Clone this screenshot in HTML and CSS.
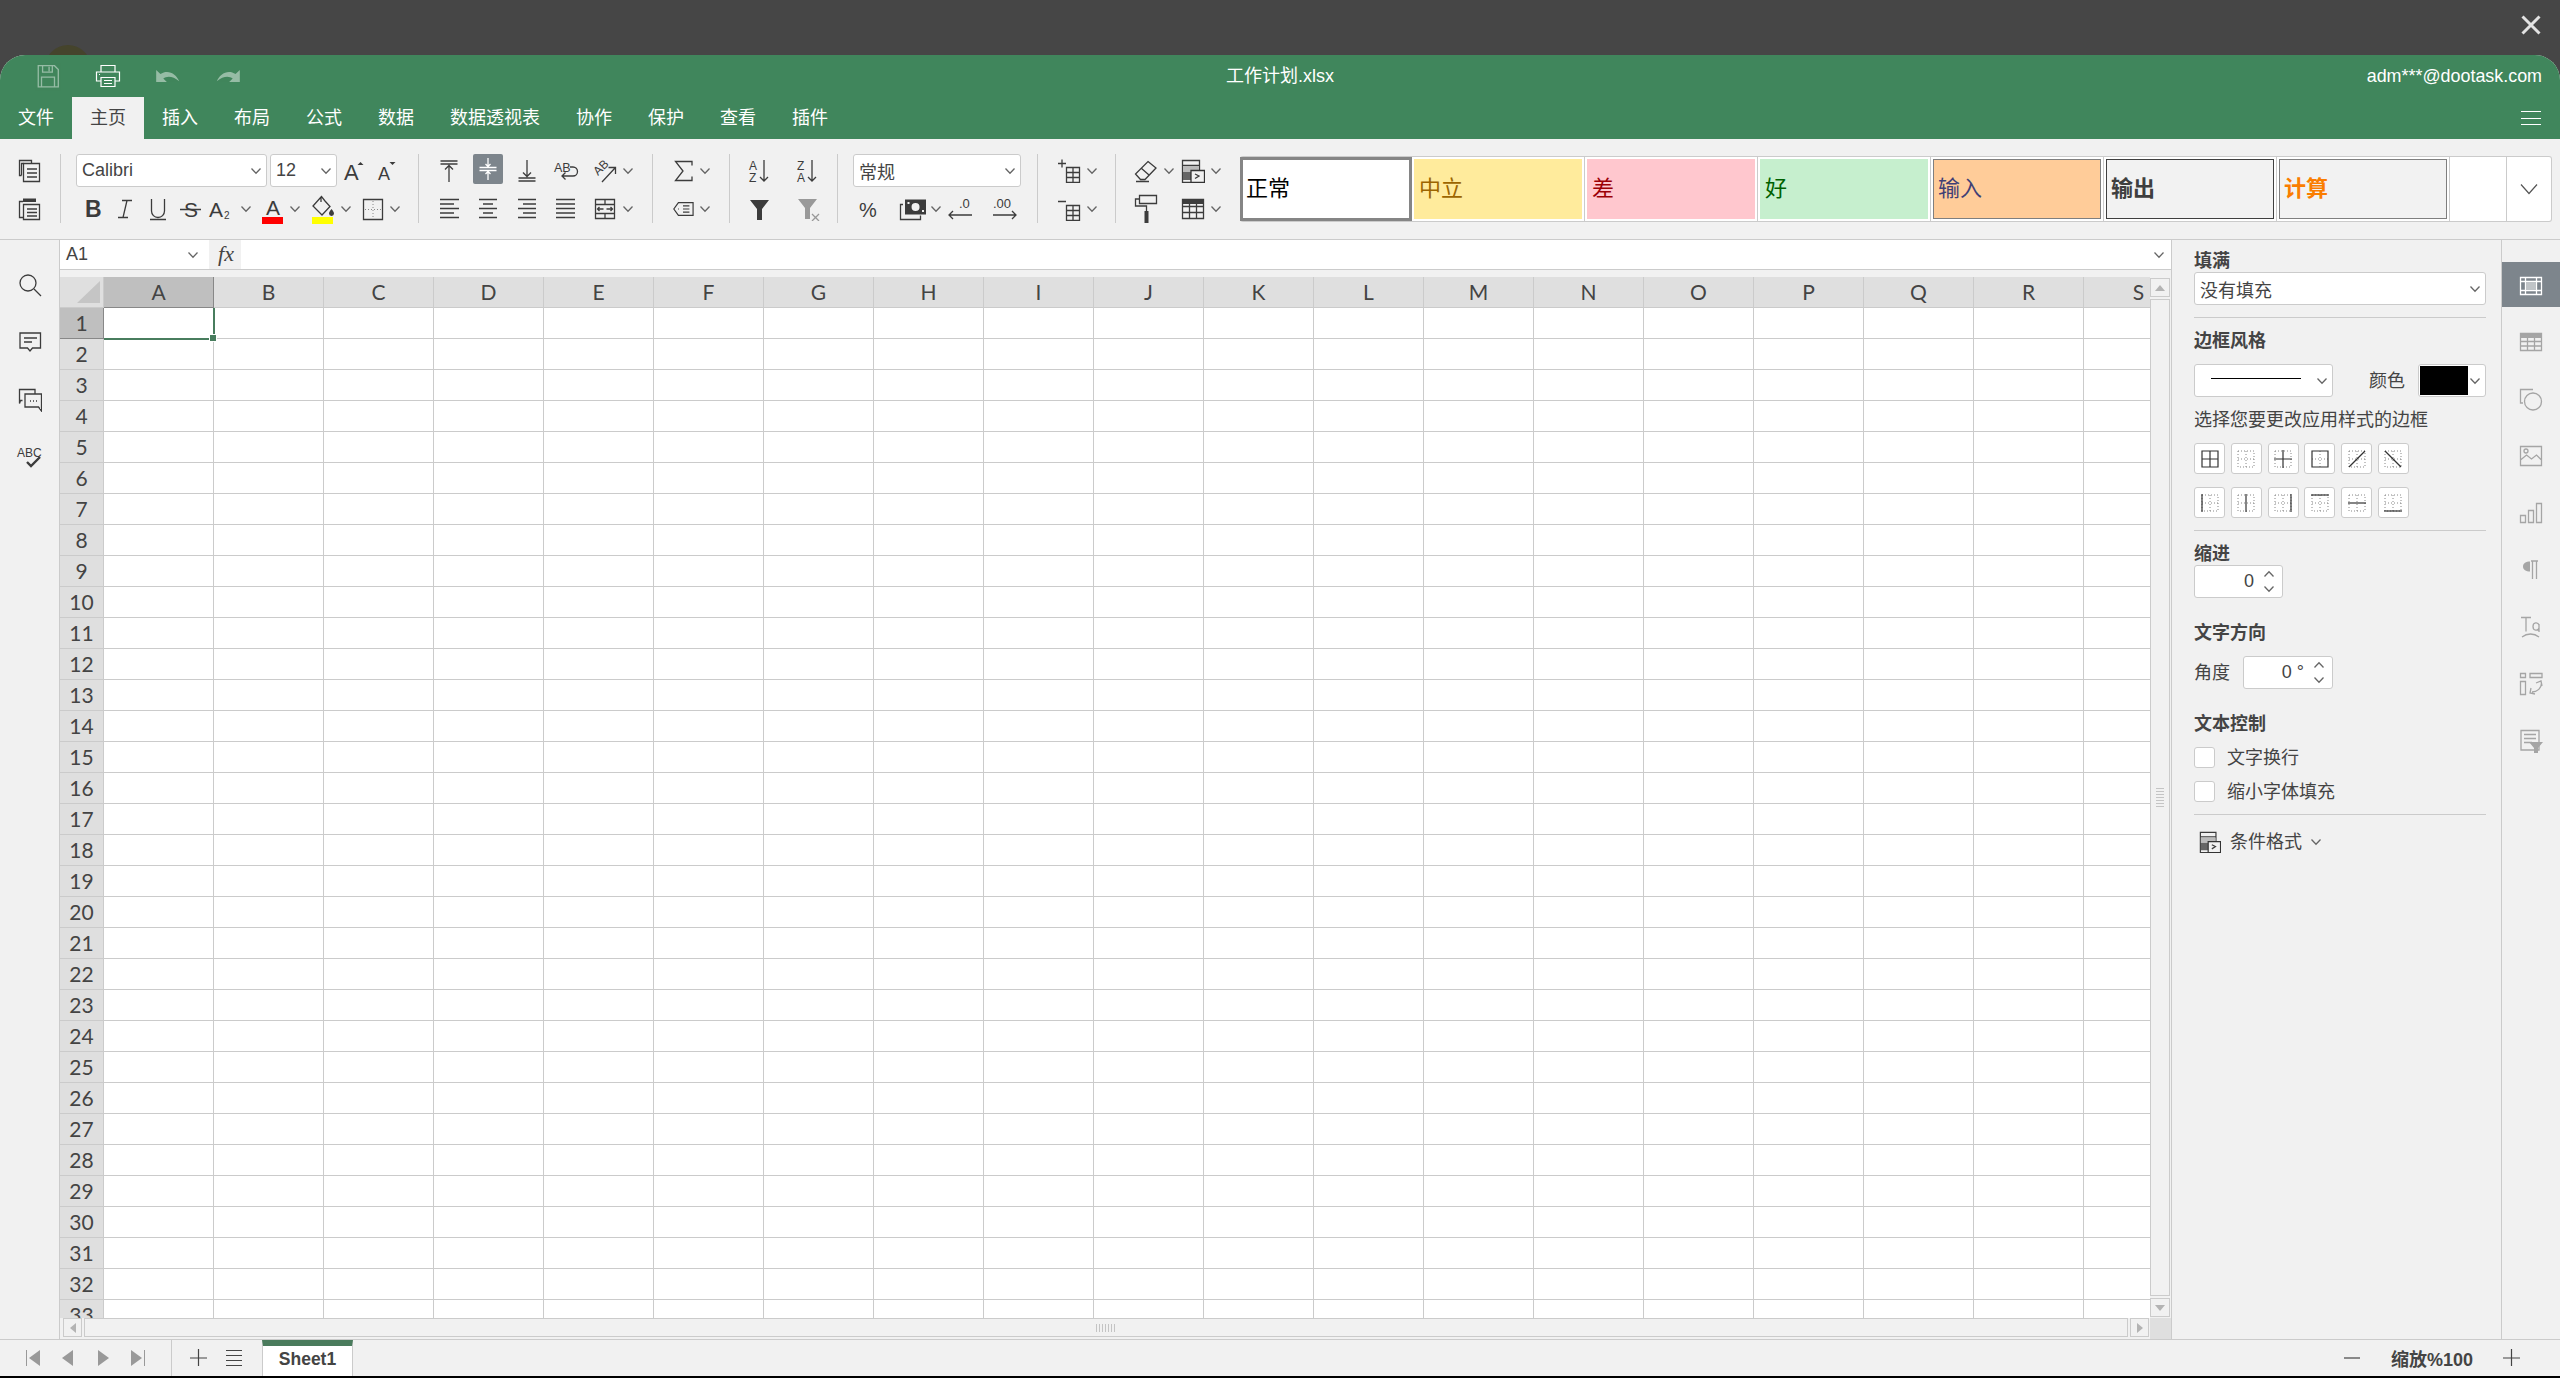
FILE: index.html
```html
<!DOCTYPE html>
<html lang="zh-CN">
<head>
<meta charset="utf-8">
<title>工作计划.xlsx</title>
<link rel="stylesheet" href="styles.css">
</head>
<body>
<svg class="defs" aria-hidden="true">
  <symbol id="chev" viewBox="0 0 12 8"><path d="M1.5 1.5 6 6.200 10.500 1.500"/></symbol>
  <symbol id="chevup" viewBox="0 0 12 8"><path d="M1.500 6.500 6 1.800 10.500 6.500"/></symbol>
  <symbol id="save" viewBox="0 0 24 24"><path d="M3 2.500h15l3.500 3.500v16h-18.500zM7 2.500v6h9v-6M13 3.500v4M6 22v-9h12v9"/></symbol>
  <symbol id="print" viewBox="0 0 26 26"><path d="M6 9V2.500h14V9M6 18H1.500V9h23v9H20M6 14.500h14v9H6zM9 17.500h8M9 20.500h8M4 11.500h1"/></symbol>
  <symbol id="undo" viewBox="0 0 22 14"><path class="f" d="M1 2v10h9L7 9.200C10 6.800 15 6.800 20.500 11.500 18 5 11 1 4.600 5.300z"/></symbol>
  <symbol id="redo" viewBox="0 0 22 14"><path class="f" d="M21 2v10h-9l3-2.800C12 6.800 7 6.800 1.500 11.500 4 5 11 1 17.400 5.300z"/></symbol>
  <symbol id="copy" viewBox="0 0 24 24"><path d="M3.500 16.500h-2v-15h12v3M5.500 4.500h16v18h-16zM9 10h10M9 14h10M9 18h10"/><path d="M3.500 16.500v-12h2"/></symbol>
  <symbol id="paste" viewBox="0 0 24 24"><path d="M5 4.500H1.500v16h4M5.500 7.500h16v15h-16zM9 12h10M9 15.500h10M9 19h10"/><path class="f" d="M5 1.500h13v3.500H5z"/></symbol>
  <symbol id="ital" viewBox="0 0 24 24"><path d="M9 3.500h10M5 20.500h10M14 3.500 10 20.500"/></symbol>
  <symbol id="under" viewBox="0 0 24 24"><path d="M5.500 2v12a6.500 6.500 0 0 0 13 0V2M4 22.500h16"/></symbol>
  <symbol id="bucket" viewBox="0 0 24 30"><path d="M10.500 2.500 2 12l9 9 8-8.500-5-5.500zM10 3V8"/><path class="f" d="M20.500 15c1.500 2 2.500 3 2.500 4.500a2.500 2.500 0 0 1-5 0c0-1.500 1-2.500 2.500-4.500z"/><path class="yel" d="M1 23h21v7H1z"/></symbol>
  <symbol id="border" viewBox="0 0 22 24"><path d="M1.500 2.500h19v20h-19z"/><path class="dots" d="M11 4v17M3 12.500h16"/></symbol>
  <symbol id="atop" viewBox="0 0 24 24"><path d="M3.500 2h17M3.500 5h17M12 23V6.500M8 10.500l4-4 4 4"/></symbol>
  <symbol id="amid" viewBox="0 0 24 24"><path d="M3.500 10.500h17M3.500 13.500h17M12 1v8.500M9.500 7l2.500 2.500L14.500 7M12 23v-8.500M9.500 17l2.500-2.500 2.500 2.500"/></symbol>
  <symbol id="abot" viewBox="0 0 24 24"><path d="M3.500 19h17M3.500 22h17M12 1v16.500M8 13.500l4 4 4-4"/></symbol>
  <symbol id="left" viewBox="0 0 24 24"><path d="M3 2.500h19M3 7h14M3 11.500h19M3 16h14M3 20.500h19"/></symbol>
  <symbol id="center" viewBox="0 0 24 24"><path d="M3 2.500h18M7 7h10M3 11.500h18M7 16h10M3 20.500h18"/></symbol>
  <symbol id="right" viewBox="0 0 24 24"><path d="M3 2.500h18M8 7h13M3 11.500h18M8 16h13M3 20.500h18"/></symbol>
  <symbol id="just" viewBox="0 0 24 24"><path d="M2 2.500h19M2 7h19M2 11.500h19M2 16h19M2 20.500h19"/></symbol>
  <symbol id="merge" viewBox="0 0 24 24"><path d="M2.500 2.500h19v19h-19zM2.500 7.500h19M2.500 16.500h19M12 2.500v5M12 16.500v5M4.500 12h6M6.500 10 4.500 12l2 2M13.500 12h6M17.500 10l2 2-2 2"/></symbol>
  <symbol id="sum" viewBox="0 0 22 24"><path d="M20 6.500V2.500H3.500L11 12 3.500 21.500H20v-4"/></symbol>
  <symbol id="tag" viewBox="0 0 24 24"><path d="M23 5H7l-5 7 5 7h16zM6.500 12h1M12 8.500h7M12 12h7M12 15.500h7"/></symbol>
  <symbol id="filter" viewBox="0 0 24 24"><path class="f" d="M2 3h19l-7 9v11h-5V12z"/></symbol>
  <symbol id="clearf" viewBox="0 0 24 24"><path class="g" d="M2 2h19l-7 9v11h-5V11z"/><path class="gs" d="M16 17l7 7M23 17l-7 7"/></symbol>
  <symbol id="money" viewBox="0 0 30 24"><path d="M5 7.500H2.500v15h20v-4"/><path class="f" fill-rule="evenodd" d="M7 2.500h21v15H7zM17.500 6a4 4 0 1 0 .1 8 4 4 0 0 0-.1-8zM9.500 5v2h2V5zM24 13v2h2v-2z"/></symbol>
  <symbol id="insc" viewBox="0 0 24 24"><path d="M1 4.500h8M5 .5v8M9.500 8.500h13v15h-13zM9.500 13.500h13M9.500 18.500h13M16 8.500v15"/></symbol>
  <symbol id="delc" viewBox="0 0 24 24"><path d="M1 4.500h8M9.500 8.500h13v15h-13zM9.500 13.500h13M9.500 18.500h13M16 8.500v15"/></symbol>
  <symbol id="erase" viewBox="0 0 24 24"><path d="M14 2.500 22 9 11 20.500H6.500L1.500 15zM7 9l8 7M2 22.500h13"/></symbol>
  <symbol id="cond" viewBox="0 0 24 24"><path d="M1.500 1.500h17v22h-17zM1.500 6.500h17"/><path class="mid" d="M2 7h16v6H2z"/><path class="dk" d="M2 13h11v8H2z"/><path class="wf" d="M10 11.500h13.500v12H10z"/><path d="M14 15l4 2-4 2.500"/></symbol>
  <symbol id="paint" viewBox="0 0 24 30"><path d="M5.500 1.500h17v8h-17zM5.500 5H1.500v7H12.500v5"/><path class="f" d="M10.500 17h4v12h-4z"/></symbol>
  <symbol id="table" viewBox="0 0 24 24"><path class="f" d="M1 2h22v5H1z"/><path d="M1.500 2.500h21v19h-21zM1.500 9.500h21M1.500 15.500h21M8.500 7v14M15.500 7v14"/></symbol>
  <symbol id="search" viewBox="0 0 24 24"><circle cx="10" cy="10" r="8"/><path d="M16 16l7 7"/></symbol>
  <symbol id="comment" viewBox="0 0 24 24"><path d="M2 2h20.500v15h-8l-2.500 3-2.500-3H2zM6 7h13M6 11h8"/></symbol>
  <symbol id="chat" viewBox="0 0 24 24"><path d="M4.500 12.500H2.500l-1 3V1.500H17v4M7 6h16.500v17l-3-4H7zM12 13h1M15 13h1M18 13h1"/></symbol>
  <symbol id="pcell" viewBox="0 0 24 24"><path d="M1.500 4.500h21v17h-21zM1.500 8.500h21M1.500 17.500h21M6.500 4.500v17M17.500 4.500v17"/><path class="panelf" d="M7 9h10v8H7z"/></symbol>
  <symbol id="ptable" viewBox="0 0 24 24"><path class="gf" d="M1 3h22v5H1z"/><path d="M1.500 3.500h21v17h-21zM1.500 11.500h21M1.500 16h21M8.500 8v12M15.500 8v12"/></symbol>
  <symbol id="pshape" viewBox="0 0 24 24"><path d="M14 2.500H1.500V16H4"/><circle cx="14" cy="14.500" r="8.500"/></symbol>
  <symbol id="pimage" viewBox="0 0 24 24"><path d="M1.500 2.500h21v19h-21zM1.500 16l6-5 5 4 5-4 5 5"/><circle cx="7" cy="7" r="2"/></symbol>
  <symbol id="pchart" viewBox="0 0 24 24"><path d="M1.500 14.500h5v7h-5zM9.500 9.500h5v12h-5zM17.500 2.500h5v19h-5z"/></symbol>
  <symbol id="ppara" viewBox="0 0 24 24"><path class="gf" d="M11 3.500c-4 0-7 1.500-7 5s3 5 7 5z"/><path d="M12 3h7M13.500 3v18M17.500 3v18"/></symbol>
  <symbol id="pta" viewBox="0 0 24 24"><path d="M2 2.500h10M7 2.500v14M3 22c5-4 12-4 17 0M20 10c-1-3-6-3-6 1.500s5 4.500 6 1.500M20 9v8"/></symbol>
  <symbol id="pspark" viewBox="0 0 24 24"><path d="M1.500 1.500h5v4h-5zM1.500 9.500h5v13h-5zM11 1.500h12v4H11zM22.500 11c0 5-4 9-9.500 9M12 16l-1 5 5 1M23 14l-1-5-5 2"/></symbol>
  <symbol id="pfilter" viewBox="0 0 24 24"><path d="M2 1.500h18V21H2zM5 5.500h12M5 9.500h12M5 13.500h8"/><path class="gf" d="M10 13h14l-5 6v5h-4v-5z"/></symbol>
  <symbol id="tfirst" viewBox="0 0 16 16"><path class="g" d="M1 0h1v16H1zM15 0v16L4 8z"/></symbol>
  <symbol id="tprev" viewBox="0 0 16 16"><path class="g" d="M13 0v16L2 8z"/></symbol>
  <symbol id="tnext" viewBox="0 0 16 16"><path class="g" d="M3 0v16l11-8z"/></symbol>
  <symbol id="tlast" viewBox="0 0 16 16"><path class="g" d="M14 0h1v16h-1zM1 0v16l11-8z"/></symbol>
  <symbol id="plus" viewBox="0 0 18 18"><path d="M0 9h17M8.500 0v17"/></symbol>
  <symbol id="menu" viewBox="0 0 18 18"><path d="M1 1.500h16M1 6.500h16M1 11.500h16M1 16.500h16"/></symbol>
  <symbol id="minus" viewBox="0 0 18 18"><path d="M1 9h16"/></symbol>
  <symbol id="b-all" viewBox="0 0 18 18"><path d="M1 1h16v16H1zM9 1v16M1 9h16"/></symbol>
  <symbol id="b-none" viewBox="0 0 18 18"><path class="dots" d="M1 1h16v16H1zM9 1v16M1 9h16"/></symbol>
  <symbol id="b-in" viewBox="0 0 18 18"><path class="dots" d="M1 1h16v16H1z"/><path d="M9 0v18M0 9h18"/></symbol>
  <symbol id="b-out" viewBox="0 0 18 18"><path class="dots" d="M9 1v16M1 9h16"/><path d="M1 1h16v16H1z"/></symbol>
  <symbol id="b-up" viewBox="0 0 18 18"><path class="dots" d="M1 1h16v16H1zM9 1v16M1 9h16"/><path d="M1 17 17 1"/></symbol>
  <symbol id="b-dn" viewBox="0 0 18 18"><path class="dots" d="M1 1h16v16H1zM9 1v16M1 9h16"/><path d="M1 1l16 16"/></symbol>
  <symbol id="b-l" viewBox="0 0 18 18"><path class="dots" d="M1 1h16v16H1zM9 1v16M1 9h16"/><path d="M1 0v18"/></symbol>
  <symbol id="b-c" viewBox="0 0 18 18"><path class="dots" d="M1 1h16v16H1zM1 9h16"/><path d="M9 0v18"/></symbol>
  <symbol id="b-r" viewBox="0 0 18 18"><path class="dots" d="M1 1h16v16H1zM9 1v16M1 9h16"/><path d="M17 0v18"/></symbol>
  <symbol id="b-t" viewBox="0 0 18 18"><path class="dots" d="M1 1h16v16H1zM9 1v16M1 9h16"/><path d="M0 1h18"/></symbol>
  <symbol id="b-m" viewBox="0 0 18 18"><path class="dots" d="M1 1h16v16H1zM9 1v16"/><path d="M0 9h18"/></symbol>
  <symbol id="b-b" viewBox="0 0 18 18"><path class="dots" d="M1 1h16v16H1zM9 1v16M1 9h16"/><path d="M0 17h18"/></symbol>
</svg>

<div class="page">
  <div class="backdrop">
    <span class="blob"></span>
    <svg class="close" viewBox="0 0 20 20"><path d="M1.500 1.500 18.500 18.500M18.500 1.500 1.500 18.500"/></svg>
  </div>

  <div class="window">
    <header class="titlebar">
      <div class="quick">
        <svg class="q dim"><use href="#save"/></svg>
        <svg class="q"><use href="#print"/></svg>
        <svg class="q dim"><use href="#undo"/></svg>
        <svg class="q dim"><use href="#redo"/></svg>
      </div>
      <div class="doc">工作计划.xlsx</div>
      <div class="user">adm***@dootask.com</div>
    </header>

    <nav class="tabs">
      <span class="tab">文件</span>
      <span class="tab on">主页</span>
      <span class="tab">插入</span>
      <span class="tab">布局</span>
      <span class="tab">公式</span>
      <span class="tab">数据</span>
      <span class="tab">数据透视表</span>
      <span class="tab">协作</span>
      <span class="tab">保护</span>
      <span class="tab">查看</span>
      <span class="tab">插件</span>
      <span class="burger"><i></i><i></i><i></i></span>
    </nav>

    <section class="toolbar">
      <div class="grp g1">
        <div class="r"><span class="b"><svg class="i"><use href="#copy"/></svg></span></div>
        <div class="r"><span class="b"><svg class="i"><use href="#paste"/></svg></span></div>
      </div>
      <div class="grp g2">
        <div class="r">
          <div class="sel s-font"><span>Calibri</span><svg class="c"><use href="#chev"/></svg></div>
          <div class="sel s-size"><span>12</span><svg class="c"><use href="#chev"/></svg></div>
          <span class="b ml2"><svg class="i n" viewBox="0 0 22 24"><text x="1" y="21" class="t" font-size="22">A</text><path class="f" d="M14.500 6l3-3 3 3z"/></svg></span>
          <span class="b ml2"><svg class="i n" viewBox="0 0 22 24"><text x="3" y="21" class="t" font-size="18">A</text><path class="f" d="M14.500 3h6l-3 3z"/></svg></span>
        </div>
        <div class="r">
          <span class="b w33 lead"><svg class="i" viewBox="0 0 24 24"><text x="5" y="20" class="t strong" font-size="23">B</text></svg></span>
          <span class="b w33"><svg class="i"><use href="#ital"/></svg></span>
          <span class="b w33"><svg class="i"><use href="#under"/></svg></span>
          <span class="b w33"><svg class="i" viewBox="0 0 24 24"><text x="5" y="20" class="t" font-size="21">S</text><path d="M1 12.500h21"/></svg></span>
          <span class="s"><svg class="i w28" viewBox="0 0 28 24"><text x="2" y="20" class="t" font-size="21">A</text><text x="17" y="22" class="t" font-size="10">2</text></svg><svg class="c"><use href="#chev"/></svg></span>
          <span class="s ml10"><svg class="i tall22" viewBox="0 0 22 30"><text x="4" y="21" class="t" font-size="21">A</text><path class="red" d="M0 23h21v7H0z"/></svg><svg class="c"><use href="#chev"/></svg></span>
          <span class="s ml10"><svg class="i tall"><use href="#bucket"/></svg><svg class="c"><use href="#chev"/></svg></span>
          <span class="s ml10"><svg class="i n"><use href="#border"/></svg><svg class="c"><use href="#chev"/></svg></span>
        </div>
      </div>
      <div class="grp g3">
        <div class="r">
          <span class="b"><svg class="i"><use href="#atop"/></svg></span>
          <span class="b active"><svg class="i"><use href="#amid"/></svg></span>
          <span class="b"><svg class="i"><use href="#abot"/></svg></span>
          <span class="b"><svg class="i" viewBox="0 0 24 24"><text x="0" y="13" class="t" font-size="12.500">AB</text><path d="M16 8h3a3 3 0 0 1 0 9H8M11.500 13.500 8 17l3.500 3.500"/></svg></span>
          <span class="b"><svg class="i" viewBox="0 0 24 24"><text x="0" y="0" class="t" font-size="12" transform="translate(5 17) rotate(-45)">AB</text><path d="M9 23 22 9M15.500 8.500H22.500V15"/></svg></span>
          <svg class="c pull"><use href="#chev"/></svg>
        </div>
        <div class="r">
          <span class="b"><svg class="i"><use href="#left"/></svg></span>
          <span class="b"><svg class="i"><use href="#center"/></svg></span>
          <span class="b"><svg class="i"><use href="#right"/></svg></span>
          <span class="b"><svg class="i"><use href="#just"/></svg></span>
          <span class="b"><svg class="i"><use href="#merge"/></svg></span>
          <svg class="c pull"><use href="#chev"/></svg>
        </div>
      </div>
      <div class="grp g4">
        <div class="r"><span class="s"><svg class="i n"><use href="#sum"/></svg><svg class="c"><use href="#chev"/></svg></span></div>
        <div class="r"><span class="s"><svg class="i n"><use href="#tag"/></svg><svg class="c"><use href="#chev"/></svg></span></div>
      </div>
      <div class="grp g5">
        <div class="r gap18">
          <span class="b"><svg class="i" viewBox="0 0 24 24"><text x="1" y="11" class="t" font-size="12">A</text><text x="1" y="23" class="t" font-size="12">Z</text><path d="M16 1v21M12 18l4 4 4-4"/></svg></span>
          <span class="b"><svg class="i" viewBox="0 0 24 24"><text x="1" y="11" class="t" font-size="12">Z</text><text x="1" y="23" class="t" font-size="12">A</text><path d="M16 1v21M12 18l4 4 4-4"/></svg></span>
        </div>
        <div class="r gap18">
          <span class="b"><svg class="i"><use href="#filter"/></svg></span>
          <span class="b"><svg class="i"><use href="#clearf"/></svg></span>
        </div>
      </div>
      <div class="grp g6">
        <div class="r"><div class="sel s-num"><span>常规</span><svg class="c"><use href="#chev"/></svg></div></div>
        <div class="r">
          <span class="b"><svg class="i" viewBox="0 0 24 24"><text x="3" y="20" class="t" font-size="20">%</text></svg></span>
          <span class="s gap2 ml15"><svg class="i w30"><use href="#money"/></svg><svg class="c"><use href="#chev"/></svg></span>
          <span class="b w26 ml5"><svg class="i w26" viewBox="0 0 26 24"><text x="12" y="11" class="t" font-size="13">.0</text><path d="M25 18H2M6 14l-4 4 4 4"/></svg></span>
          <span class="b w26 ml19"><svg class="i w26" viewBox="0 0 26 24"><text x="1" y="11" class="t" font-size="13">.00</text><path d="M1 18h23M20 14l4 4-4 4"/></svg></span>
        </div>
      </div>
      <div class="grp g7">
        <div class="r"><span class="s"><svg class="i"><use href="#insc"/></svg><svg class="c"><use href="#chev"/></svg></span></div>
        <div class="r"><span class="s"><svg class="i"><use href="#delc"/></svg><svg class="c"><use href="#chev"/></svg></span></div>
      </div>
      <div class="grp g8">
        <div class="r">
          <span class="s"><svg class="i"><use href="#erase"/></svg><svg class="c"><use href="#chev"/></svg></span>
          <span class="s ml6"><svg class="i"><use href="#cond"/></svg><svg class="c"><use href="#chev"/></svg></span>
        </div>
        <div class="r">
          <span class="s"><svg class="i tall"><use href="#paint"/></svg><span class="ph"></span></span>
          <span class="s ml6"><svg class="i"><use href="#table"/></svg><svg class="c"><use href="#chev"/></svg></span>
        </div>
      </div>
      <div class="gallery">
        <div class="gcell picked"><span class="gfill normal">正常</span></div>
        <div class="gcell"><span class="gfill neutral">中立</span></div>
        <div class="gcell"><span class="gfill bad">差</span></div>
        <div class="gcell"><span class="gfill good">好</span></div>
        <div class="gcell"><span class="gfill input">输入</span></div>
        <div class="gcell"><span class="gfill output">输出</span></div>
        <div class="gcell"><span class="gfill calc">计算</span></div>
        <div class="gspace"></div>
        <div class="gmore"><svg viewBox="0 0 18 12"><path d="M1 1.500 9 10.500 17 1.500"/></svg></div>
      </div>
    </section>

    <main class="main">
      <aside class="leftbar">
        <svg class="i"><use href="#search"/></svg>
        <svg class="i"><use href="#comment"/></svg>
        <svg class="i"><use href="#chat"/></svg>
        <svg class="i w26" viewBox="0 0 26 24"><text x="0" y="11" class="t" font-size="12">ABC</text><path class="heavy" d="M10 16l4 4 9-9"/></svg>
      </aside>

      <section class="sheet">
        <div class="formula">
          <div class="namebox"><span>A1</span><svg class="c"><use href="#chev"/></svg></div>
          <div class="fx">fx</div>
          <div class="finput"><svg class="c"><use href="#chev"/></svg></div>
        </div>
        <div class="strip"></div>
        <div class="gridrow">
          <div class="gridbody">
            <div class="colhead">
              <div class="corner"><svg viewBox="0 0 24 23"><path d="M24 0v23H0z"/></svg></div>
              <div class="col sel-h">A</div><div class="col">B</div><div class="col">C</div><div class="col">D</div><div class="col">E</div><div class="col">F</div><div class="col">G</div><div class="col">H</div><div class="col">I</div><div class="col">J</div><div class="col">K</div><div class="col">L</div><div class="col">M</div><div class="col">N</div><div class="col">O</div><div class="col">P</div><div class="col">Q</div><div class="col">R</div><div class="col">S</div>
            </div>
            <div class="gridmain">
              <div class="rowhead">
                <div class="rw sel-h">1</div><div class="rw">2</div><div class="rw">3</div><div class="rw">4</div><div class="rw">5</div><div class="rw">6</div><div class="rw">7</div><div class="rw">8</div><div class="rw">9</div><div class="rw">10</div><div class="rw">11</div><div class="rw">12</div><div class="rw">13</div><div class="rw">14</div><div class="rw">15</div><div class="rw">16</div><div class="rw">17</div><div class="rw">18</div><div class="rw">19</div><div class="rw">20</div><div class="rw">21</div><div class="rw">22</div><div class="rw">23</div><div class="rw">24</div><div class="rw">25</div><div class="rw">26</div><div class="rw">27</div><div class="rw">28</div><div class="rw">29</div><div class="rw">30</div><div class="rw">31</div><div class="rw">32</div><div class="rw">33</div>
              </div>
              <div class="cells"><div class="cursor"><i></i></div></div>
            </div>
          </div>
          <div class="vscroll">
            <div class="sbtn"><span class="tri up"></span></div>
            <div class="vthumb"><span class="vgrip"></span></div>
            <div class="sbtn"><span class="tri down"></span></div>
          </div>
        </div>
        <div class="hscroll">
          <div class="sbtn"><span class="tri lft"></span></div>
          <div class="hthumb"><span class="hgrip"></span></div>
          <div class="sbtn"><span class="tri rgt"></span></div>
          <div class="scorner"></div>
        </div>
      </section>

      <aside class="panel">
        <div class="lab first">填满</div>
        <div class="sel s-fill"><span>没有填充</span><svg class="c"><use href="#chev"/></svg></div>
        <hr class="sep">
        <div class="lab">边框风格</div>
        <div class="frow">
          <div class="sel s-line"><span class="line"></span><svg class="c"><use href="#chev"/></svg></div>
          <span class="txt colorlab">颜色</span>
          <div class="sel s-color"><span class="swatch"></span><svg class="c"><use href="#chev"/></svg></div>
        </div>
        <div class="txt hint">选择您要更改应用样式的边框</div>
        <div class="bgrid">
          <span class="bb"><svg><use href="#b-all"/></svg></span>
          <span class="bb"><svg><use href="#b-none"/></svg></span>
          <span class="bb"><svg><use href="#b-in"/></svg></span>
          <span class="bb"><svg><use href="#b-out"/></svg></span>
          <span class="bb"><svg><use href="#b-up"/></svg></span>
          <span class="bb"><svg><use href="#b-dn"/></svg></span>
          <span class="bb"><svg><use href="#b-l"/></svg></span>
          <span class="bb"><svg><use href="#b-c"/></svg></span>
          <span class="bb"><svg><use href="#b-r"/></svg></span>
          <span class="bb"><svg><use href="#b-t"/></svg></span>
          <span class="bb"><svg><use href="#b-m"/></svg></span>
          <span class="bb"><svg><use href="#b-b"/></svg></span>
        </div>
        <hr class="sep">
        <div class="lab">缩进</div>
        <div class="spin indent"><span>0</span><span class="arrows"><svg class="c"><use href="#chevup"/></svg><svg class="c"><use href="#chev"/></svg></span></div>
        <div class="lab gapped">文字方向</div>
        <div class="frow">
          <span class="txt">角度</span>
          <div class="spin angle"><span>0 °</span><span class="arrows"><svg class="c"><use href="#chevup"/></svg><svg class="c"><use href="#chev"/></svg></span></div>
        </div>
        <div class="lab gapped">文本控制</div>
        <label class="chk"><span class="box"></span><span class="txt">文字换行</span></label>
        <label class="chk"><span class="box"></span><span class="txt">缩小字体填充</span></label>
        <hr class="sep">
        <div class="condf"><svg class="i w20"><use href="#cond"/></svg><span class="txt">条件格式</span><svg class="c"><use href="#chev"/></svg></div>
      </aside>

      <aside class="rightbar">
        <span class="ri on"><svg class="i"><use href="#pcell"/></svg></span>
        <span class="ri"><svg class="i"><use href="#ptable"/></svg></span>
        <span class="ri"><svg class="i"><use href="#pshape"/></svg></span>
        <span class="ri"><svg class="i"><use href="#pimage"/></svg></span>
        <span class="ri"><svg class="i"><use href="#pchart"/></svg></span>
        <span class="ri"><svg class="i"><use href="#ppara"/></svg></span>
        <span class="ri"><svg class="i"><use href="#pta"/></svg></span>
        <span class="ri"><svg class="i"><use href="#pspark"/></svg></span>
        <span class="ri"><svg class="i"><use href="#pfilter"/></svg></span>
      </aside>
    </main>

    <footer class="status">
      <div class="nav">
        <svg class="nv"><use href="#tfirst"/></svg>
        <svg class="nv"><use href="#tprev"/></svg>
        <svg class="nv"><use href="#tnext"/></svg>
        <svg class="nv"><use href="#tlast"/></svg>
      </div>
      <svg class="act add"><use href="#plus"/></svg>
      <svg class="act lst"><use href="#menu"/></svg>
      <div class="stab">Sheet1</div>
      <div class="zoom">
        <svg class="act"><use href="#minus"/></svg>
        <span class="zt">缩放%100</span>
        <svg class="act"><use href="#plus"/></svg>
      </div>
    </footer>
  </div>
</div>
</body>
</html>
```

FILE: styles.css
```css
* { box-sizing: border-box; }
html, body { margin: 0; padding: 0; }
body {
  width: 2560px;
  height: 1378px;
  overflow: hidden;
  background: #000;
  font-family: "Liberation Sans", "Noto Sans CJK SC", sans-serif;
  color: #444;
}
.defs { position: absolute; width: 0; height: 0; overflow: hidden; }
.page {
  height: 1376px;
  background: #464646;
  display: flex;
  flex-direction: column;
}
.backdrop {
  height: 55px;
  flex: none;
  position: relative;
  display: flex;
  justify-content: flex-end;
  align-items: flex-start;
  overflow: hidden;
}
.blob {
  position: absolute;
  left: 45px;
  top: 45px;
  width: 46px;
  height: 46px;
  border-radius: 50%;
  background: #45442c;
}
.close { width: 20px; height: 20px; margin: 15px 19px 0 0; fill: none; stroke: #e2e2e2; stroke-width: 3; }

.window {
  flex: 1;
  min-height: 0;
  display: flex;
  flex-direction: column;
  background: #f1f1f1;
  border-radius: 25px 25px 0 0;
  overflow: hidden;
}

/* title */
.titlebar {
  height: 42px;
  flex: none;
  background: #40865c;
  display: grid;
  grid-template-columns: 1fr auto 1fr;
  align-items: center;
  color: #fff;
  font-size: 18px;
}
.quick { display: flex; align-items: center; padding-left: 35px; }
.q { width: 26px; height: 26px; margin-right: 34px; fill: none; stroke: #fff; stroke-width: 1.2; color: #fff; }
.dim { opacity: .45; }
.doc { line-height: 42px; }
.user { text-align: right; padding-right: 18px; font-size: 17.900px; }

/* tabs */
.tabs {
  height: 42px;
  flex: none;
  background: #40865c;
  display: flex;
  align-items: stretch;
  color: #fff;
  font-size: 18px;
  position: relative;
}
.tab { padding: 0 18px; line-height: 42px; }
.tab.on { background: #f1f1f1; color: #444; }
.burger {
  margin-left: auto;
  margin-right: 19px;
  align-self: center;
  width: 20px;
  height: 14px;
  display: flex;
  flex-direction: column;
  justify-content: space-between;
}
.burger i { display: block; height: 1px; background: #fff; }

/* toolbar */
.toolbar {
  height: 101px;
  flex: none;
  display: flex;
  align-items: flex-start;
  padding-top: 15px;
  background: #f1f1f1;
  border-bottom: 1px solid #cbcbcb;
}
.grp {
  height: 69px;
  flex: none;
  border-right: 1px solid #cbcbcb;
}
.g1 { width: 61px; padding-left: 15px; }
.g2 { width: 358px; padding-left: 15px; }
.g3 { width: 234px; padding-left: 15px; }
.g4 { width: 77px; padding-left: 19px; }
.g5 { width: 108px; padding-left: 15px; }
.g6 { width: 200px; padding-left: 15px; }
.g7 { width: 78px; padding-left: 19px; }
.g8 { width: 124px; padding-left: 18px; border-right: 0; }

.r { display: flex; align-items: center; height: 33px; }
.r + .r { margin-top: 5px; }
.g3 .r { gap: 9px; }
.gap18 { gap: 18px; }
.b {
  width: 30px;
  height: 30px;
  flex: none;
  display: flex;
  align-items: center;
  justify-content: center;
}
.w33 { width: 33px; }
.w26 { width: 26px; }
.lead { margin-left: -1px; }
.ml2 { margin-left: 2px; }
.ml5 { margin-left: 5px; }
.ml6 { margin-left: 6px; }
.ml10 { margin-left: 10px; }
.ml15 { margin-left: 15px; }
.ml19 { margin-left: 19px; }
.s.gap2 { gap: 2px; }
.pull { margin-left: -7px; }
.ph { width: 12px; flex: none; }
.s { display: flex; align-items: center; gap: 5px; flex: none; }

.i {
  width: 24px;
  height: 24px;
  flex: none;
  fill: none;
  color: #3c3c3c;
  stroke: currentColor;
  stroke-width: 1.3;
  overflow: visible;
}
.i.n { width: 22px; }
.i.w26 { width: 26px; }
.i.w28 { width: 28px; }
.i.w30 { width: 30px; }
.i.w20 { width: 22px; height: 22px; }
.i.tall { height: 30px; }
.i.tall22 { width: 22px; height: 30px; }
.c {
  width: 12px;
  height: 8px;
  flex: none;
  fill: none;
  stroke: #666;
  stroke-width: 1.3;
}
.t { fill: currentColor; stroke: none; font-family: "Liberation Sans", sans-serif; }
.t.strong { font-weight: 700; }
.f { fill: currentColor; stroke: none; }
.dk { fill: #666; stroke: none; }
.g { fill: #999; stroke: none; }
.gs { stroke: #999; }
.gf { fill: #a5a5a5; stroke: none; }
.mid { fill: #bbb; stroke: none; }
.wf { fill: #f1f1f1; stroke: #333; }
.red { fill: #f00; stroke: none; }
.yel { fill: #ff0; stroke: none; }
.dots { stroke: #888; stroke-dasharray: 1 2; stroke-width: 1; }
.heavy { stroke-width: 2.4; }

.active { background: #7d858c; border-radius: 2px; align-self: flex-start; }
.active .i { color: #fff; }

.sel {
  height: 33px;
  flex: none;
  display: flex;
  align-items: center;
  justify-content: space-between;
  background: #fff;
  border: 1px solid #cbcbcb;
  border-radius: 3px;
  font-size: 18px;
  padding: 0 4px 0 5px;
  color: #444;
}
.s-font { width: 191px; }
.s-size { width: 67px; margin-left: 3px; }
.s-num { width: 168px; }

/* gallery */
.gallery {
  width: 1312px;
  height: 66px;
  margin-top: 2px;
  flex: none;
  display: flex;
  background: #fff;
  border: 1px solid #cbcbcb;
  border-left: 0;
  border-radius: 3px;
  font-size: 22px;
}
.gcell {
  width: 173px;
  flex: none;
  padding: 2px 2px;
  border-right: 1px solid #cbcbcb;
  display: flex;
}
.gcell.picked { outline: 3px solid #858585; outline-offset: -3px; width: 172px; padding-left: 3px; }
.gfill {
  flex: 1;
  line-height: 60px;
  padding-left: 5px;
}
.normal { color: #000; padding-left: 3px; }
.neutral { background: #ffeb9c; color: #9c6500; }
.bad { background: #ffc7ce; color: #9c0006; }
.good { background: #c6efce; color: #006100; }
.input { background: #fc9; color: #3f3f76; box-shadow: inset 0 0 0 1px #7f7f7f; }
.output { background: #f2f2f2; color: #3f3f3f; font-weight: 700; box-shadow: inset 0 0 0 1px #3f3f3f; }
.calc { background: #f2f2f2; color: #fa7d00; font-weight: 700; box-shadow: inset 0 0 0 1px #7f7f7f; }
.gspace { width: 57px; flex: none; border-right: 1px solid #cbcbcb; }
.gmore { flex: 1; display: flex; align-items: center; justify-content: center; }
.gmore svg { width: 18px; height: 12px; fill: none; stroke: #555; stroke-width: 1.2; }

/* main */
.main { flex: 1; min-height: 0; display: flex; background: #f1f1f1; }
.leftbar {
  width: 60px;
  flex: none;
  border-right: 1px solid #cbcbcb;
  display: flex;
  flex-direction: column;
  align-items: center;
  padding-top: 33px;
  gap: 33.500px;
}
.sheet {
  width: 2112px;
  flex: none;
  display: flex;
  flex-direction: column;
  border-right: 1px solid #cbcbcb;
}
.formula {
  height: 30px;
  flex: none;
  display: flex;
  border-bottom: 1px solid #cbcbcb;
}
.namebox {
  width: 149px;
  background: #fff;
  display: flex;
  align-items: center;
  justify-content: space-between;
  padding: 0 10px 0 6px;
  font-size: 18px;
}
.fx {
  width: 30px;
  margin-left: 2px;
  text-align: center;
  font: italic 22px/28px "Liberation Serif", serif;
}
.finput {
  flex: 1;
  background: #fff;
  display: flex;
  align-items: center;
  justify-content: flex-end;
  padding-right: 6px;
}
.strip { height: 7px; flex: none; }
.gridrow { flex: 1; min-height: 0; display: flex; }
.gridbody {
  flex: 1;
  min-width: 0;
  display: flex;
  flex-direction: column;
  overflow: hidden;
}
.colhead { height: 31px; flex: none; display: flex; }
.corner {
  width: 44px;
  flex: none;
  background: #dfdfdf;
  border-right: 1px solid #cbcbcb;
  border-bottom: 1px solid #cbcbcb;
  padding: 4px 3px 0 17px;
}
.corner svg { display: block; width: 23px; height: 22px; fill: #c5c5c5; }
.col {
  width: 110px;
  flex: none;
  background: #dfdfdf;
  border-right: 1px solid #cbcbcb;
  border-bottom: 1px solid #cbcbcb;
  text-align: center;
  font: 21px/30px Lato, "Liberation Sans", sans-serif;
  color: #444;
}
.gridmain { flex: 1; min-height: 0; display: flex; }
.rowhead { width: 44px; flex: none; overflow: hidden; }
.rw {
  height: 31px;
  background: #dfdfdf;
  border-right: 1px solid #cbcbcb;
  border-bottom: 1px solid #cbcbcb;
  text-align: center;
  font: 21px/29px Lato, "Liberation Sans", sans-serif;
  color: #444;
}
.sel-h { background: #bfbfbf; border-right-color: #888; border-bottom-color: #888; }
.cells {
  flex: 1;
  position: relative;
  background-color: #fff;
  background-image:
    linear-gradient(to right, transparent 109px, #cbcbcb 109px),
    linear-gradient(to bottom, transparent 30px, #cbcbcb 30px);
  background-size: 110px 31px;
}
.cursor {
  position: absolute;
  left: 0;
  top: 0;
  width: 111px;
  height: 32px;
  border-right: 2px solid #487d5e;
  border-bottom: 2px solid #487d5e;
}
.cursor i {
  position: absolute;
  right: -3px;
  bottom: -3px;
  width: 6px;
  height: 6px;
  background: #487d5e;
  border: 1px solid #487d5e;
  outline: 1px solid #fff;
}
.vscroll {
  width: 21px;
  flex: none;
  display: flex;
  flex-direction: column;
  gap: 2px;
  padding: 1px 1px 1px 0;
}
.sbtn {
  flex: none;
  width: 20px;
  height: 20px;
  border: 1px solid #cbcbcb;
  background: #f1f1f1;
  display: flex;
  align-items: center;
  justify-content: center;
}
.vscroll .sbtn { height: 19px; }
.vthumb {
  flex: 1;
  border: 1px solid #cbcbcb;
  display: flex;
  align-items: center;
  justify-content: center;
}
.vgrip {
  width: 8px;
  height: 20px;
  background: repeating-linear-gradient(to bottom, #c4c4c4 0 1px, transparent 1px 3px);
}
.tri { width: 0; height: 0; border-style: solid; border-color: transparent; }
.tri.up { border-width: 0 5px 6px; border-bottom-color: #b3b3b3; }
.tri.down { border-width: 6px 5px 0; border-top-color: #b3b3b3; }
.tri.lft { border-width: 5px 6px 5px 0; border-right-color: #b3b3b3; }
.tri.rgt { border-width: 5px 0 5px 6px; border-left-color: #b3b3b3; }
.hscroll {
  height: 21px;
  flex: none;
  display: flex;
  gap: 2px;
  padding-left: 2px;
  border-left: 1px solid transparent;
}
.hscroll .sbtn { height: 19px; width: 19px; }
.hthumb {
  flex: 1;
  height: 19px;
  border: 1px solid #cbcbcb;
  display: flex;
  align-items: center;
  justify-content: center;
}
.hgrip {
  width: 20px;
  height: 8px;
  background: repeating-linear-gradient(to right, #c4c4c4 0 1px, transparent 1px 3px);
}
.scorner { width: 21px; flex: none; margin-left: -1px; background: #dfdfdf; }

/* format panel */
.panel {
  width: 330px;
  flex: none;
  padding: 0 15px 0 22px;
  border-right: 1px solid #cbcbcb;
  font-size: 18px;
  color: #444;
}
.lab { font-weight: 700; line-height: 22px; margin-top: 12px; }
.lab.first { margin-top: 10px; }
.lab.gapped { margin-top: 24px; }
.txt { line-height: 22px; }
.sep { height: 1px; border: 0; background: #cbcbcb; margin: 12px 0 0; }
.s-fill { width: 100%; }
.frow { display: flex; align-items: center; margin-top: 12px; }
.s-line { width: 139px; }
.line { width: 90px; height: 1px; margin: -5px 0 0 11px; background: #000; }
.colorlab { margin-left: 36px; }
.s-color { width: 68px; margin-left: auto; padding: 1px 4px 1px 1px; }
.swatch { width: 48px; height: 29px; background: #000; }
.hint { margin-top: 12px; }
.bgrid {
  display: grid;
  grid-template-columns: repeat(6, 31px);
  grid-auto-rows: 31px;
  column-gap: 5.800px;
  row-gap: 13px;
  margin-top: 12px;
}
.bb {
  background: #fff;
  border: 1px solid #cbcbcb;
  border-radius: 3px;
  display: flex;
  align-items: center;
  justify-content: center;
}
.bb svg {
  width: 18px;
  height: 18px;
  fill: none;
  stroke: #333;
  stroke-width: 1.2;
  overflow: visible;
}
.spin {
  height: 33px;
  background: #fff;
  border: 1px solid #cbcbcb;
  border-radius: 3px;
  display: flex;
  align-items: center;
  justify-content: flex-end;
  padding-right: 7px;
  gap: 9px;
  font-size: 18px;
}
.indent { width: 89px; }
.angle { width: 90px; margin-left: 13px; }
.arrows { display: flex; flex-direction: column; gap: 7px; }
.chk { display: flex; align-items: center; gap: 12px; margin-top: 12px; height: 21px; }
.chk + .chk { margin-top: 13px; }
.box {
  width: 21px;
  height: 21px;
  flex: none;
  background: #fff;
  border: 1px solid #cbcbcb;
  border-radius: 3px;
}
.condf { display: flex; align-items: center; margin: 16px 0 0 5px; height: 22px; }
.condf .txt { margin-left: 9px; margin-right: 8px; }

/* right icons */
.rightbar {
  flex: 1;
  display: flex;
  flex-direction: column;
  gap: 12px;
  padding-top: 22px;
}
.ri {
  height: 45px;
  flex: none;
  display: flex;
  align-items: center;
  justify-content: center;
}
.ri .i { color: #a5a5a5; }
.ri.on { background: #7d858c; }
.ri.on .i { color: #fff; }
.panelf { fill: #c0c4c7; stroke: none; }

/* status */
.status {
  height: 37px;
  flex: none;
  display: flex;
  align-items: stretch;
  border-top: 1px solid #cbcbcb;
  background: #f1f1f1;
}
.nav {
  width: 172px;
  flex: none;
  display: flex;
  align-items: center;
  padding-left: 25px;
  gap: 19px;
  border-right: 1px solid #cbcbcb;
}
.nv { width: 16px; height: 16px; flex: none; }
.act {
  width: 18px;
  height: 18px;
  flex: none;
  align-self: center;
  fill: none;
  stroke: #444;
  stroke-width: 1.2;
}
.add { margin-left: 18px; }
.lst { margin-left: 17px; }
.stab {
  width: 91px;
  margin-left: 19px;
  background: #fff;
  border-top: 6px solid #4a7b5c;
  border-left: 1px solid #cbcbcb;
  border-right: 1px solid #cbcbcb;
  text-align: center;
  font-weight: 700;
  font-size: 17.500px;
  line-height: 27px;
  color: #444;
}
.zoom {
  margin-left: auto;
  display: flex;
  align-items: center;
  padding-right: 39px;
}
.zt { font-weight: 700; font-size: 18px; margin: 0 30px; }
```
